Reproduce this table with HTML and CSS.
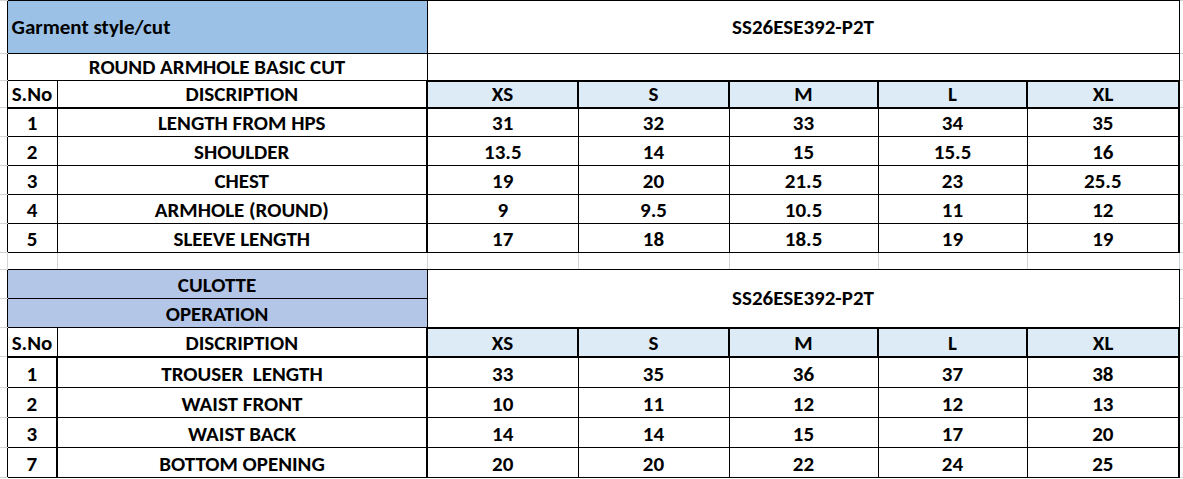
FILE: index.html
```html
<!DOCTYPE html>
<html>
<head>
<meta charset="utf-8">
<link rel="stylesheet" href="styles.css">
</head>
<body>
<table class="sheet">
  <colgroup>
    <col class="c-stub-l"><col class="c-sno"><col class="c-desc">
    <col class="c-xs"><col class="c-s"><col class="c-m"><col class="c-l"><col class="c-xl">
    <col class="c-stub-r">
  </colgroup>
  <tr class="r-53">
    <td class="stub"></td>
    <td colspan="2" class="title blue1">Garment style/cut</td>
    <td colspan="5" class="style-no mid">SS26ESE392-P2T</td>
    <td class="stub"></td>
  </tr>
  <tr class="r-27">
    <td class="stub"></td>
    <td colspan="2">ROUND ARMHOLE BASIC CUT</td>
    <td colspan="5"></td>
    <td class="stub"></td>
  </tr>
  <tr class="r-27 head">
    <td class="stub"></td>
    <td class="sno">S.No</td>
    <td class="desc">DISCRIPTION</td>
    <td class="size">XS</td><td class="size">S</td><td class="size">M</td><td class="size">L</td><td class="size xl">XL</td>
    <td class="stub"></td>
  </tr>
  <tr class="r-29">
    <td class="stub"></td><td>1</td><td class="desc">LENGTH FROM HPS</td>
    <td class="v1">31</td><td>32</td><td>33</td><td>34</td><td class="xl">35</td><td class="stub"></td>
  </tr>
  <tr class="r-29">
    <td class="stub"></td><td>2</td><td class="desc">SHOULDER</td>
    <td class="v1">13.5</td><td>14</td><td>15</td><td>15.5</td><td class="xl">16</td><td class="stub"></td>
  </tr>
  <tr class="r-29">
    <td class="stub"></td><td>3</td><td class="desc">CHEST</td>
    <td class="v1">19</td><td>20</td><td>21.5</td><td>23</td><td class="xl">25.5</td><td class="stub"></td>
  </tr>
  <tr class="r-29">
    <td class="stub"></td><td>4</td><td class="desc">ARMHOLE (ROUND)</td>
    <td class="v1">9</td><td>9.5</td><td>10.5</td><td>11</td><td class="xl">12</td><td class="stub"></td>
  </tr>
  <tr class="r-29">
    <td class="stub"></td><td>5</td><td class="desc">SLEEVE LENGTH</td>
    <td class="v1">17</td><td>18</td><td>18.5</td><td>19</td><td class="xl">19</td><td class="stub"></td>
  </tr>
  <tr class="r-gap">
    <td class="stub"></td><td class="gap"></td><td class="gap"></td><td class="gap"></td><td class="gap"></td><td class="gap"></td><td class="gap"></td><td class="gap"></td><td class="stub"></td>
  </tr>
  <tr class="r-29">
    <td class="stub"></td>
    <td colspan="2" class="blue2">CULOTTE</td>
    <td colspan="5" rowspan="2" class="style-no mid">SS26ESE392-P2T</td>
    <td class="stub"></td>
  </tr>
  <tr class="r-29">
    <td class="stub"></td>
    <td colspan="2" class="blue2">OPERATION</td>
    <td class="stub"></td>
  </tr>
  <tr class="r-29 head">
    <td class="stub"></td>
    <td class="sno">S.No</td>
    <td class="desc">DISCRIPTION</td>
    <td class="size">XS</td><td class="size">S</td><td class="size">M</td><td class="size">L</td><td class="size xl">XL</td>
    <td class="stub"></td>
  </tr>
  <tr class="r-31">
    <td class="stub"></td><td>1</td><td class="desc thick-l">TROUSER&nbsp; LENGTH</td>
    <td class="v1">33</td><td>35</td><td>36</td><td>37</td><td class="xl">38</td><td class="stub"></td>
  </tr>
  <tr class="r-30">
    <td class="stub"></td><td>2</td><td class="desc thick-l">WAIST FRONT</td>
    <td class="v1">10</td><td>11</td><td>12</td><td>12</td><td class="xl">13</td><td class="stub"></td>
  </tr>
  <tr class="r-30">
    <td class="stub"></td><td>3</td><td class="desc thick-l">WAIST BACK</td>
    <td class="v1">14</td><td>14</td><td>15</td><td>17</td><td class="xl">20</td><td class="stub"></td>
  </tr>
  <tr class="r-30">
    <td class="stub"></td><td>7</td><td class="desc thick-l">BOTTOM OPENING</td>
    <td class="v1">20</td><td>20</td><td>22</td><td>24</td><td class="xl">25</td><td class="stub"></td>
  </tr>
</table>
</body>
</html>
```
FILE: styles.css
```css
html, body {
  margin: 0;
  padding: 0;
  background: #ffffff;
}

body {
  font-family: Carlito, Lato, "Open Sans", sans-serif;
  color: #000;
}

.sheet {
  border-collapse: collapse;
  table-layout: fixed;
  width: 1183px;
}

.c-stub-l { width: 7px; }
.c-sno { width: 50px; }
.c-desc { width: 370px; }
.c-xs { width: 151px; }
.c-s { width: 151px; }
.c-m { width: 149px; }
.c-l { width: 149px; }
.c-xl { width: 152px; }
.c-stub-r { width: 4px; }

.sheet td {
  border: 1px solid #000;
  padding: 0 2px 2px;
  font-size: 21px;
  font-weight: bold;
  text-align: center;
  vertical-align: bottom;
  line-height: 22px;
  white-space: nowrap;
  overflow: hidden;
}

.sheet td.stub {
  border-left: none;
  border-right: none;
  border-top: 1px solid #d4d4d4;
  border-bottom: 1px solid #d4d4d4;
  padding: 0;
}

.sheet td.gap {
  border-left: 1px solid #d4d4d4;
  border-right: 1px solid #d4d4d4;
  padding: 0;
}

.r-53 { height: 53px; }
.r-27 { height: 27px; }
.r-29 { height: 29px; }
.r-30 { height: 30px; }
.r-31 { height: 31px; }
.r-gap { height: 17px; }

.sheet td.title {
  text-align: left;
  vertical-align: middle;
  padding: 0 4px;
}

.sheet td.mid {
  vertical-align: middle;
  padding-bottom: 0;
}

.blue1 { background: #9bc2e6; }
.blue2 { background: #b4c6e7; }

.head .size {
  background: #ddebf7;
  border-width: 2px 2px 2px 2px;
}

.head td {
  border-bottom-width: 2px;
}

.sheet td.v1 { border-left-width: 2px; }
.sheet td.xl { border-right-width: 2px; }
.sheet td.thick-l { border-left-width: 2px; }
```
